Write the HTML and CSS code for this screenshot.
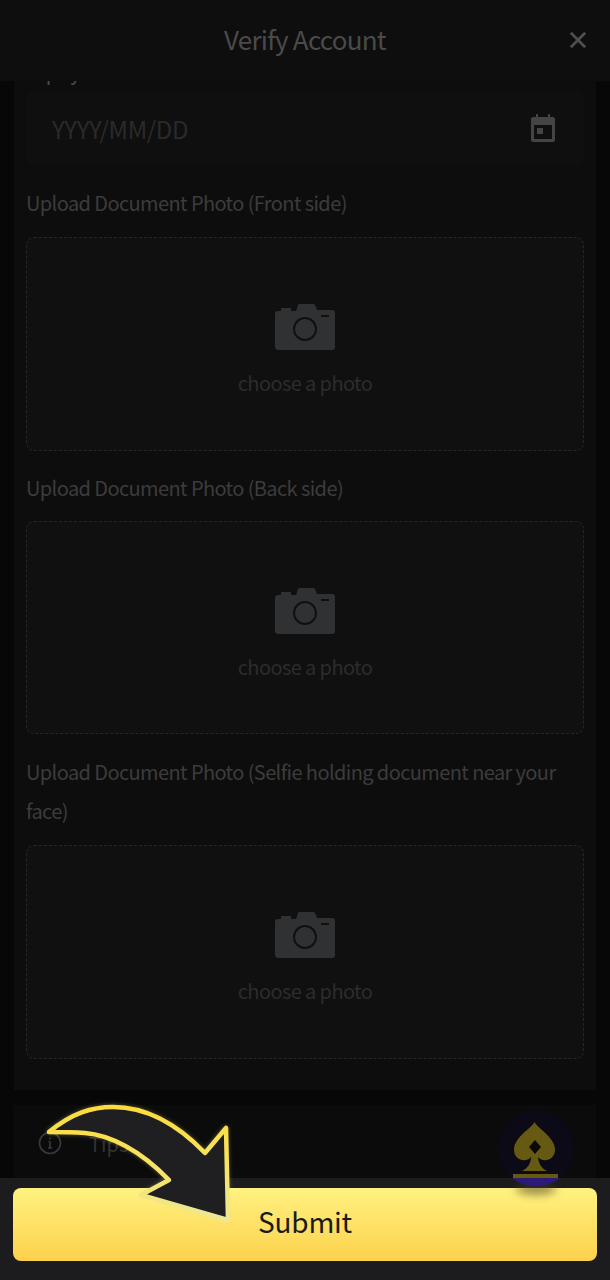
FILE: index.html
```html
<!DOCTYPE html>
<html lang="en">
<head>
    <meta charset="UTF-8" />
    <title>Verify Account</title>
    <link rel="stylesheet" href="styles.css">
</head>
<body>

<div class="page">
    <!-- header -->
    <header class="top-bar">
        <h1>Verify Account</h1>
        <svg class="close-icon" viewBox="0 0 20 20"><path d="M2 2 L18 18 M18 2 L2 18"/></svg>
    </header>

    <!-- form, scrolled down a bit -->
    <main class="scroll-area">
        <div class="panel">
            <div class="field-label clipped">Expiry Date</div>
            <div class="date-input">
                <span class="placeholder">YYYY/MM/DD</span>
                <svg class="calendar-icon" viewBox="0 0 26 28">
                    <path d="M1 5 a2 2 0 0 1 2 -2 h3 v-3 h2 v3 h10 v-3 h2 v3 h3 a2 2 0 0 1 2 2 v21 a2 2 0 0 1 -2 2 h-20 a2 2 0 0 1 -2 -2 z M4 11 v14 h18 v-14 z"/>
                    <rect x="7" y="14" width="6" height="6"/>
                </svg>
            </div>

            <div class="field-label">Upload Document Photo (Front side)</div>
            <div class="photo-box first">
                <svg class="camera-icon" viewBox="0 0 60 46"><use href="#camera"/></svg>
                <span>choose a photo</span>
            </div>

            <div class="field-label">Upload Document Photo (Back side)</div>
            <div class="photo-box">
                <svg class="camera-icon" viewBox="0 0 60 46"><use href="#camera"/></svg>
                <span>choose a photo</span>
            </div>

            <div class="field-label">Upload Document Photo (Selfie holding document near your face)</div>
            <div class="photo-box last">
                <svg class="camera-icon" viewBox="0 0 60 46"><use href="#camera"/></svg>
                <span>choose a photo</span>
            </div>
        </div>

        <div class="tips">
            <svg class="info-icon" viewBox="0 0 24 24">
                <circle cx="12" cy="12" r="10.5"/>
                <path d="M12 10.5 V17 M10 17 H14 M10.5 10.5 H12"/>
                <circle class="dot" cx="12" cy="7.5" r="1"/>
            </svg>
            <span>Tips</span>
        </div>
    </main>

    <!-- footer -->
    <footer class="bottom-bar">
        <button class="submit-btn">Submit</button>
    </footer>

    <!-- floating spade button -->
    <svg class="float-btn" viewBox="0 0 80 100">
        <defs>
            <clipPath id="ball-top"><rect x="0" y="0" width="80" height="69"/></clipPath>
            <clipPath id="ball-bottom"><rect x="0" y="69" width="80" height="21"/></clipPath>
        </defs>
        <ellipse class="ball-shadow" cx="40" cy="80" rx="20" ry="6"/>
        <circle cx="40" cy="39.5" r="38" fill="#0d0a17" clip-path="url(#ball-top)"/>
        <circle cx="40" cy="39.5" r="38" fill="#2c1a78" clip-path="url(#ball-bottom)"/>
        <path class="spade" d="M38.5 13 C42 20 59 28 59 41 C59 50 48 55 42 48 C42.5 54 45 59 51 62 H26 C32 59 35 54 35 48 C29 55 18 50 18 41 C18 28 35 20 38.5 13 Z"/>
        <path fill="#0c0a08" d="M39 31 L45 38 L39 45 L33 38 Z"/>
        <rect class="spade" x="17" y="65" width="45" height="4"/>
    </svg>

    <!-- pointer arrow on top of the page -->
    <svg class="arrow" viewBox="0 0 610 1280">
        <defs>
            <linearGradient id="arrow-edge" gradientUnits="userSpaceOnUse" x1="0" y1="1107" x2="0" y2="1222">
                <stop offset="0" stop-color="#fcdc3c"/>
                <stop offset="0.6" stop-color="#f5e56a"/>
                <stop offset="1" stop-color="#ece79a"/>
            </linearGradient>
        </defs>
        <path d="M49 1132 C72 1113 92 1107 113 1107 C150 1107 180 1127 205 1153 L226 1128 L228 1220 L141 1195 L169 1180 C140 1150 110 1135 85 1133 C72 1132 60 1132 49 1132 Z"/>
    </svg>
</div>

<svg class="icon-defs" width="0" height="0">
    <symbol id="camera" viewBox="0 0 60 46">
        <path fill="#303133" fill-rule="evenodd" d="M6 4 H16 V7 H21 L23 1 Q23.5 0 25 0 H38 Q39.5 0 40 1 L42 6 H57 Q60 6 60 9 V43 Q60 46 57 46 H3 Q0 46 0 43 V10 Q0 7 3 7 H6 Z M30 13 A12 12 0 1 0 30 37 A12 12 0 1 0 30 13 Z M30 15 A10 10 0 1 1 30 35 A10 10 0 1 1 30 15 Z M46 11 V13 H54 V11 Z"/>
    </symbol>
</svg>

</body>
</html>
```

FILE: styles.css
```css
* {
    box-sizing: border-box;
}

html, body {
    margin: 0;
    height: 1280px;
    overflow: hidden;
    background: #070707;
}

body {
    font-family: "Noto Sans CJK SC", "Noto Sans", sans-serif;
    color: #3c3c3c;
}

.page {
    position: relative;
    display: flex;
    flex-direction: column;
    height: 1280px;
}

.icon-defs {
    position: absolute;
}

.top-bar {
    position: relative;
    z-index: 2;
    display: flex;
    align-items: center;
    justify-content: center;
    flex: none;
    height: 81px;
    padding-bottom: 5px;
    background: #0e0e0e;
}

.top-bar h1 {
    margin: 0;
    font-size: 26px;
    font-weight: 400;
    letter-spacing: -0.75px;
    color: #4a4a4a;
}

.close-icon {
    position: absolute;
    right: 23px;
    top: 31px;
    width: 18px;
    height: 18px;
    fill: none;
    stroke: #4f4f4f;
    stroke-width: 3;
}

.scroll-area {
    flex: 1;
    min-height: 0;
    overflow: hidden;
}

.panel {
    margin: -29px 14px 0;
    padding: 0 12px 31px;
    background: #0d0d0d;
}

.field-label {
    font-size: 20px;
    line-height: 39px;
    letter-spacing: -0.6px;
    color: #3c3c3c;
}

.field-label.clipped {
    height: 39px;
    color: #4a4a4a;
}

.date-input {
    display: flex;
    align-items: center;
    justify-content: space-between;
    height: 74px;
    margin-bottom: 18px;
    padding: 0 28px 0 26px;
    background: #0f0f0f;
    border-radius: 8px;
}

.placeholder {
    font-size: 24px;
    letter-spacing: -0.4px;
    color: #2a2a2a;
}

.calendar-icon {
    width: 26px;
    height: 28px;
    fill: #444;
}

.photo-box {
    display: flex;
    flex-direction: column;
    align-items: center;
    justify-content: center;
    height: 213.5px;
    margin: 14px 0 18px;
    padding-top: 14px;
    background: #101010;
    border: 1px dashed #262626;
    border-radius: 8px;
    font-size: 20px;
    letter-spacing: -0.6px;
    color: #2c2c2c;
}

.photo-box.first {
    margin: 15px 0 17px;
}

.photo-box.last {
    margin: 15px 0 0;
}

.camera-icon {
    width: 60px;
    height: 46px;
    margin-bottom: 18px;
}

.tips {
    display: flex;
    align-items: center;
    gap: 27px;
    height: 77px;
    margin: 15px 14px 0;
    padding-left: 24px;
    background: #0b0b0b;
    font-size: 20px;
    color: #333;
}

.info-icon {
    width: 24px;
    height: 24px;
    fill: none;
    stroke: #3a3a3a;
    stroke-width: 1.6;
}

.info-icon .dot {
    fill: #3a3a3a;
    stroke: none;
}

.bottom-bar {
    flex: none;
    height: 102px;
    padding: 10px 13px 0;
    background: #1c1c1e;
}

.submit-btn {
    display: block;
    width: 100%;
    height: 73px;
    padding: 0 0 7px;
    border: none;
    border-radius: 8px;
    background: linear-gradient(180deg, #fff280 0%, #fdd14c 100%);
    font-family: inherit;
    font-size: 28px;
    letter-spacing: -0.2px;
    color: #1a1a1a;
}

/* floats over the footer edge */
.float-btn {
    position: absolute;
    left: 496px;
    top: 1109px;
    width: 80px;
    height: 100px;
}

.ball-shadow {
    fill: rgba(70, 60, 30, 0.55);
    filter: blur(4px);
}

.spade {
    fill: #665a12;
}

.arrow {
    position: absolute;
    left: 0;
    top: 0;
    width: 610px;
    height: 1280px;
    pointer-events: none;
    filter: drop-shadow(0 0 2px rgba(240, 230, 130, 0.35));
}

.arrow path {
    fill: #1f1f21;
    stroke: url(#arrow-edge);
    stroke-width: 4.5;
    stroke-linejoin: round;
}
```
